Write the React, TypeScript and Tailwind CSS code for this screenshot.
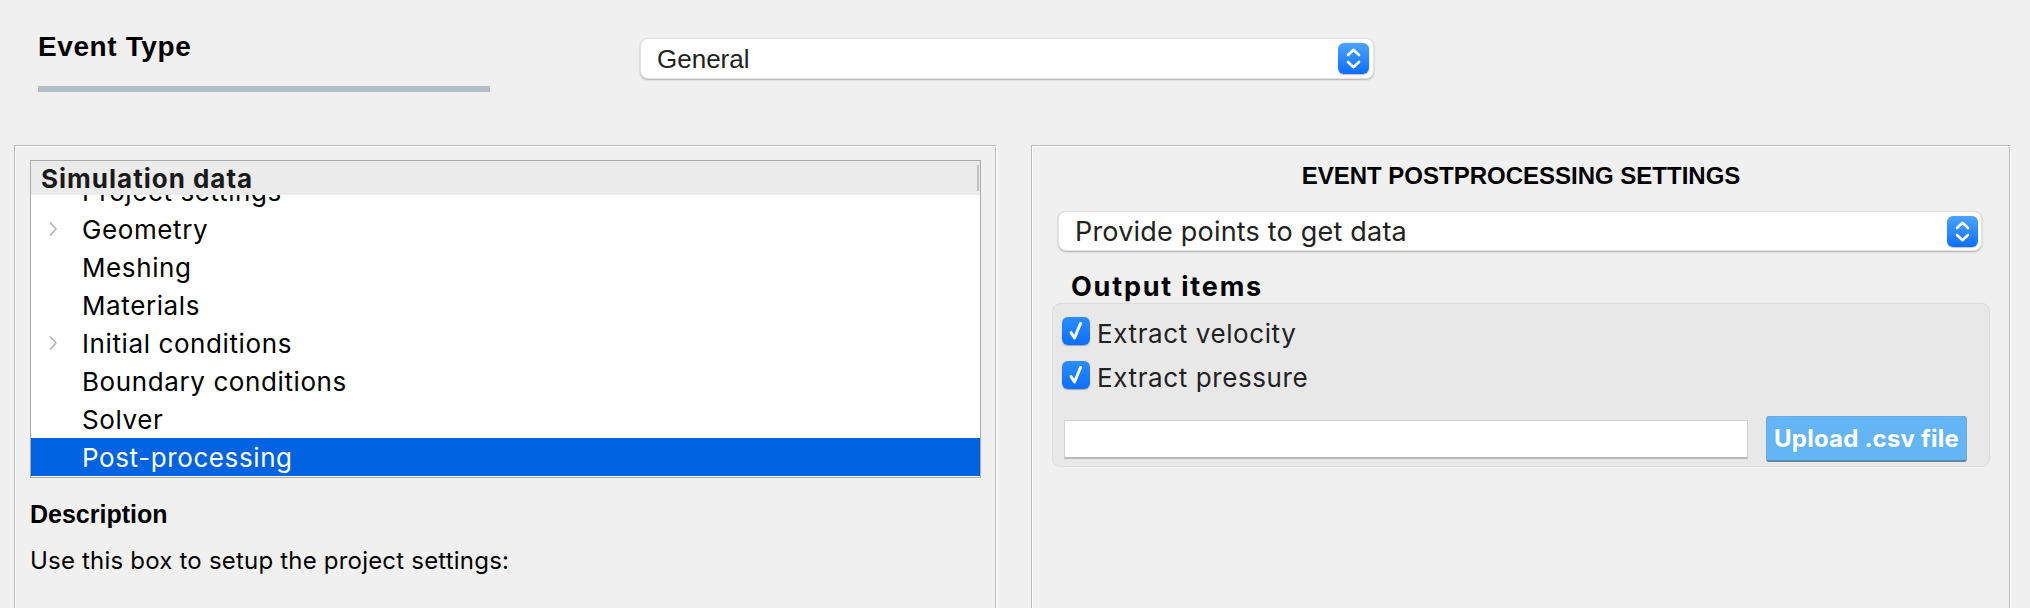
import React from "react";

function Stepper() {
  return (
    <div className="flex h-[31px] w-[31px] shrink-0 items-center justify-center rounded-[6px] bg-linear-to-b from-[#4aa3ff] to-[#0a6dff] shadow-[0_0.5px_1px_rgba(0,0,0,0.25)]">
      <svg width="31" height="31" viewBox="0 0 31 31" fill="none" stroke="white" strokeWidth="2.6" strokeLinecap="round" strokeLinejoin="round">
        <path d="M10 12 L15.5 6.8 L21 12" />
        <path d="M10 19 L15.5 24.2 L21 19" />
      </svg>
    </div>
  );
}

function Check() {
  return (
    <div className="flex h-[28px] w-[28px] shrink-0 items-center justify-center rounded-[6px] bg-linear-to-b from-[#2b8dff] to-[#0a6efe] shadow-[0_0.5px_1px_rgba(0,0,0,0.3)]">
      <svg width="28" height="28" viewBox="0 0 28 28" fill="none" stroke="white" strokeWidth="3" strokeLinecap="round" strokeLinejoin="round">
        <path d="M9 15.5 L12.5 21 L18.5 6.5" />
      </svg>
    </div>
  );
}

function Chevron() {
  return (
    <svg width="12" height="16" viewBox="0 0 12 16" fill="none" stroke="#b4b4b4" strokeWidth="1.7" strokeLinecap="round" strokeLinejoin="round">
      <path d="M3.5 2 L9 8 L3.5 14" />
    </svg>
  );
}

const rows: { label: string; chev?: boolean; selected?: boolean }[] = [
  { label: "Project settings" },
  { label: "Geometry", chev: true },
  { label: "Meshing" },
  { label: "Materials" },
  { label: "Initial conditions", chev: true },
  { label: "Boundary conditions" },
  { label: "Solver" },
  { label: "Post-processing", selected: true },
];

export default function App() {
  return (
    <div className="flex h-[608px] w-[2030px] flex-col overflow-hidden bg-[#f0f0f0] font-['Inter',sans-serif] text-black">
      {/* Top bar */}
      <div className="flex h-[145px] shrink-0 items-start">
        <div className="ml-[38px] w-[452px] pt-[33px]">
          <div className="font-['Liberation_Sans',Arial,sans-serif] text-[28px] font-bold leading-[28px] tracking-[0.6px]">Event Type</div>
          <div className="mt-[25px] h-[6px] bg-[#b0bec5]" />
        </div>
        <div className="ml-[150px] mt-[38px] flex h-[41px] w-[734px] items-center justify-between rounded-[8px] border border-[#e2e2e2] bg-white pl-[16px] pr-[4px] shadow-[0_1px_2px_rgba(0,0,0,0.28)]">
          <span className="font-['Liberation_Sans',Arial,sans-serif] text-[26px] leading-none text-[#222]">General</span>
          <Stepper />
        </div>
      </div>

      {/* Panels */}
      <div className="flex gap-[34px] pl-[14px]">
        {/* Left panel */}
        <div className="h-[520px] w-[983px] shrink-0 border border-b-white border-l-[#bcbcbc] border-r-white border-t-[#bcbcbc] px-[15px] pt-[14px] shadow-[inset_1px_1px_0_#ffffff,inset_-1px_-1px_0_#bcbcbc]">
          <div className="border border-[#a9a9a9]">
            <div className="flex h-[34px] items-center justify-between bg-[#ebebeb] pl-[10px]">
              <span className="pt-[2px] text-[26px] font-bold leading-none tracking-[1px] text-[#1a1a1a]">Simulation data</span>
              <div className="mr-[1px] h-[26px] w-[2px] bg-[#c2c2c2]" />
            </div>
            <div className="h-[282px] overflow-hidden bg-white">
              <div className="mt-[-23px]">
                {rows.map((r) => (
                  <div
                    key={r.label}
                    className={
                      r.selected
                        ? "flex h-[38px] items-center bg-[#0063e1] text-white"
                        : "flex h-[38px] items-center text-black"
                    }
                  >
                    <div className="flex w-[51px] shrink-0 items-center pl-[16px]">{r.chev ? <Chevron /> : null}</div>
                    <span className="pt-[2px] text-[26px] leading-none tracking-[0.6px]">{r.label}</span>
                  </div>
                ))}
              </div>
            </div>
          </div>
          <div className="mt-[24px] font-['Liberation_Sans',Arial,sans-serif] text-[25px] font-bold leading-[25px]">Description</div>
          <div className="mt-[22px] text-[24px] leading-[24px] tracking-[0.2px]">Use this box to setup the project settings:</div>
        </div>

        {/* Right panel */}
        <div className="h-[520px] w-[980px] shrink-0 border border-b-white border-l-[#bcbcbc] border-r-white border-t-[#bcbcbc] pt-[18px] shadow-[inset_1px_1px_0_#ffffff,inset_-1px_-1px_0_#bcbcbc]">
          <div className="text-center font-['Liberation_Sans',Arial,sans-serif] text-[24px] font-bold leading-[24px]">EVENT POSTPROCESSING SETTINGS</div>
          <div className="ml-[26px] mr-[28px] mt-[23px] flex h-[40px] items-center justify-between rounded-[8px] border border-[#e2e2e2] bg-white pl-[16px] pr-[3px] shadow-[0_1px_2px_rgba(0,0,0,0.28)]">
            <span className="pt-[1px] text-[27px] leading-none tracking-[0.2px] text-[#222]">Provide points to get data</span>
            <Stepper />
          </div>
          <div className="ml-[39px] mt-[22px] text-[27px] font-bold leading-[27px] tracking-[1.8px]">Output items</div>
          <div className="mx-[20px] mt-[3px] rounded-[8px] border border-[#dcdcdc] bg-[#e8e8e8] pb-[4px] pl-[9px] pr-[22px] pt-[13px]">
            <div className="flex h-[28px] items-center gap-[7px]">
              <Check />
              <span className="pt-[5px] text-[26px] leading-none tracking-[0.6px] text-[#222]">Extract velocity</span>
            </div>
            <div className="mt-[16px] flex h-[28px] items-center gap-[7px]">
              <Check />
              <span className="pt-[5px] text-[26px] leading-none tracking-[0.6px] text-[#222]">Extract pressure</span>
            </div>
            <div className="mt-[27px] flex items-center">
              <div className="ml-[2px] h-[39px] flex-1 border border-[#d2d2d2] border-b-2 border-b-[#b9b9b9] bg-white" />
              <div className="ml-[18px] flex h-[46px] w-[201px] items-center justify-center rounded-[3px] border border-[#6fa9d8] border-b-2 border-b-[#5d88aa] bg-[#64b5f6] text-[24px] font-bold tracking-[0.2px] text-white">
                Upload .csv file
              </div>
            </div>
          </div>
        </div>
      </div>
    </div>
  );
}
